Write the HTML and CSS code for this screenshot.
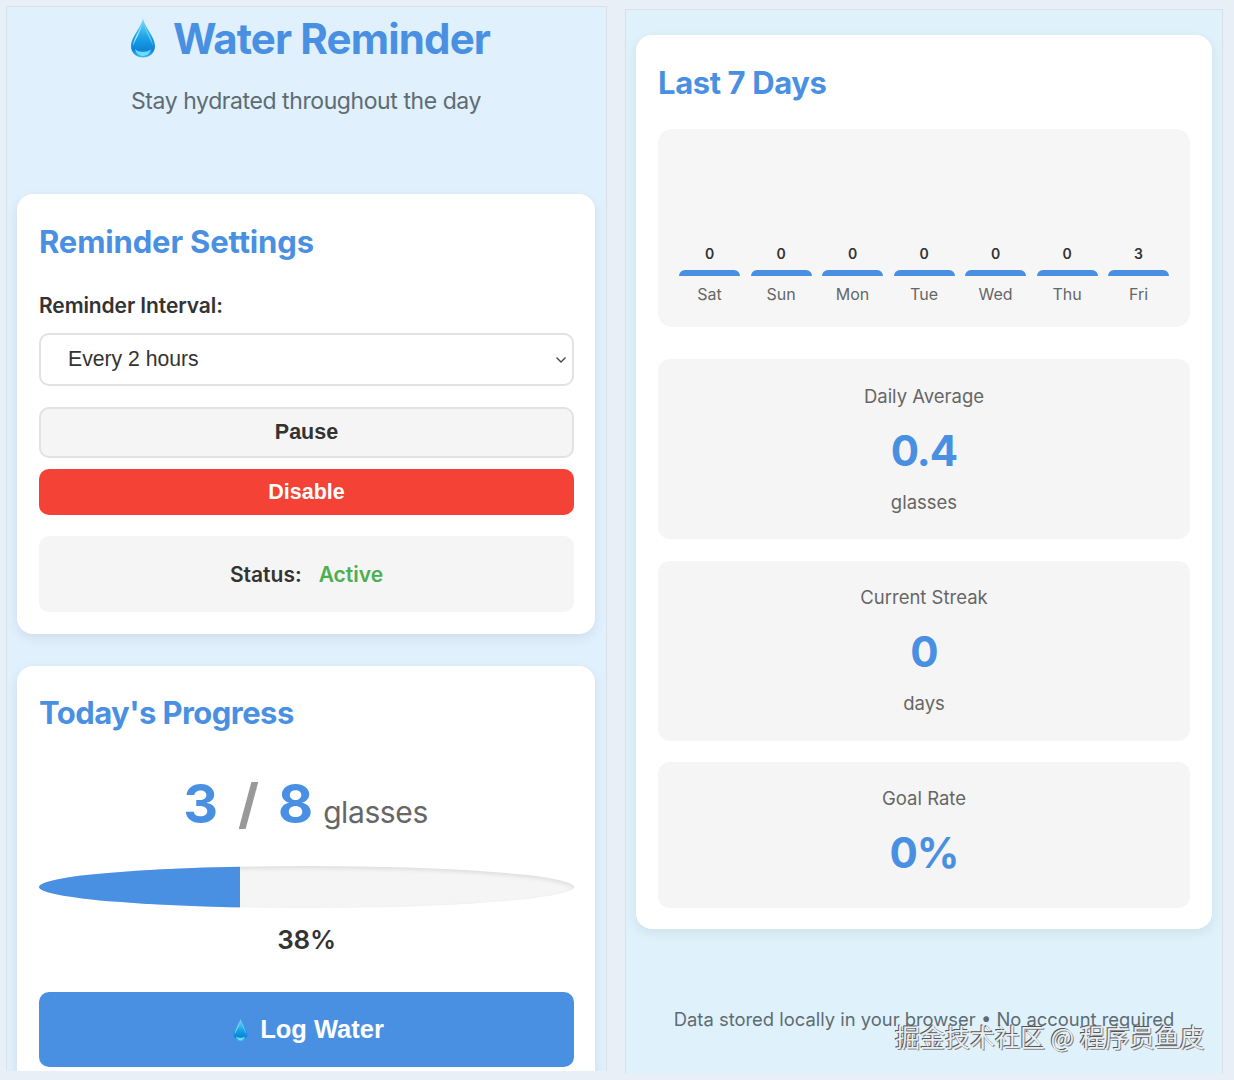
FILE: index.html
```html
<!DOCTYPE html>
<html lang="en">
<head>
<meta charset="utf-8">
<title>Water Reminder</title>
<link rel="stylesheet" href="styles.css">
</head>
<body>
<svg class="defs" width="0" height="0" aria-hidden="true">
  <defs>
    <linearGradient id="dropFill" x1="0" y1="0" x2="0" y2="1">
      <stop offset="0" stop-color="#7fdcfb"/>
      <stop offset="0.45" stop-color="#1ea7ea"/>
      <stop offset="0.8" stop-color="#0c84d6"/>
      <stop offset="1" stop-color="#3cc0f2"/>
    </linearGradient>
    <symbol id="drop" viewBox="0 0 26 40">
      <path d="M13 0.5C11.5 9 1 19 1 28C1 35 6.4 39.5 13 39.5C19.6 39.5 25 35 25 28C25 19 14.5 9 13 0.5Z" fill="url(#dropFill)"/>
      <path d="M13 2C12 10 3.4 20 3 28C5 22 10.5 15 13 2Z" fill="#d4f4ff" opacity=".85"/>
      <path d="M13 2C14 10 22.6 20 23 28C21 22 15.5 15 13 2Z" fill="#a8e8ff" opacity=".6"/>
      <path d="M5 31C6 36 10 38 13 38C16 38 20 36 21 31C18 35 8 35 5 31Z" fill="#7fe3ff" opacity=".85"/>
    </symbol>
  </defs>
</svg>
<div class="screen">
  <main class="panel panel-left">
    <header class="hero">
      <h1 class="hero-title"><svg class="hero-drop"><use href="#drop"/></svg><span>Water Reminder</span></h1>
      <p class="hero-sub">Stay hydrated throughout the day</p>
    </header>
    <section class="card card-settings">
      <h2 class="card-title title-settings">Reminder Settings</h2>
      <label class="field-label">Reminder Interval:</label>
      <div class="select">
        <span>Every 2 hours</span>
        <svg class="chevron" viewBox="0 0 12 8"><path d="M1.5 1.5L6 6L10.5 1.5" fill="none" stroke="#444" stroke-width="1.3"/></svg>
      </div>
      <button class="btn btn-pause">Pause</button>
      <button class="btn btn-disable">Disable</button>
      <div class="status"><span class="status-label">Status:</span><span class="status-value">Active</span></div>
    </section>
    <section class="card card-progress">
      <h2 class="card-title title-progress">Today's Progress</h2>
      <div class="count"><span class="count-num">3</span><span class="count-slash">/</span><span class="count-num">8</span><span class="count-unit">glasses</span></div>
      <div class="track"><div class="track-fill" style="width:37.5%"></div></div>
      <div class="percent">38%</div>
      <button class="btn-log"><svg class="log-drop"><use href="#drop"/></svg><span>Log Water</span></button>
    </section>
  </main>
  <aside class="panel panel-right">
    <section class="card card-history">
      <h2 class="card-title">Last 7 Days</h2>
      <div class="chart">
        <div class="day"><span class="day-val">0</span><i class="day-bar"></i><span class="day-name">Sat</span></div>
        <div class="day"><span class="day-val">0</span><i class="day-bar"></i><span class="day-name">Sun</span></div>
        <div class="day"><span class="day-val">0</span><i class="day-bar"></i><span class="day-name">Mon</span></div>
        <div class="day"><span class="day-val">0</span><i class="day-bar"></i><span class="day-name">Tue</span></div>
        <div class="day"><span class="day-val">0</span><i class="day-bar"></i><span class="day-name">Wed</span></div>
        <div class="day"><span class="day-val">0</span><i class="day-bar"></i><span class="day-name">Thu</span></div>
        <div class="day"><span class="day-val">3</span><i class="day-bar"></i><span class="day-name">Fri</span></div>
      </div>
      <div class="stat">
        <div class="stat-label">Daily Average</div>
        <div class="stat-value">0.4</div>
        <div class="stat-unit">glasses</div>
      </div>
      <div class="stat">
        <div class="stat-label">Current Streak</div>
        <div class="stat-value">0</div>
        <div class="stat-unit">days</div>
      </div>
      <div class="stat stat-last">
        <div class="stat-label">Goal Rate</div>
        <div class="stat-value">0%</div>
      </div>
    </section>
    <footer class="foot">Data stored locally in your browser • No account required</footer>
  </aside>
</div>
<div class="watermark">掘金技术社区 @ 程序员鱼皮</div>
</body>
</html>
```
FILE: styles.css
```css
* { box-sizing: border-box; }
html, body { margin: 0; height: 1080px; overflow: hidden; }
body {
  position: relative;
  background: #e9eff6;
  font-family: Inter, "Liberation Sans", sans-serif;
  color: #333;
}
.defs { position: absolute; }
.screen {
  display: flex;
  align-items: flex-start;
  gap: 18px;
  padding: 6px 11px 0 6px;
  height: 1071px;
}
.panel {
  height: 100%;
  overflow: hidden;
  background: #e0f0fc;
  border: 1px solid #d8e0ea;
  border-bottom: 0;
}
.panel-left { width: 601px; padding: 0 11px 0 10px; }
.panel-right { width: 598px; margin-top: 3px; padding: 25px 10px 0; background: #dff2fc; }
.hero { height: 187px; text-align: center; padding-top: 7px; }
.hero-title {
  margin: 0;
  display: flex;
  justify-content: center;
  align-items: center;
  gap: 17px;
  font-size: 42px;
  line-height: 50px;
  font-weight: 700;
  color: #4a90e2;
  letter-spacing: -0.85px;
  padding-left: 8px;
}
.hero-drop { width: 26px; height: 40px; margin-top: -3px; }
.hero-sub { margin: 23px 0 0; font-size: 23px; line-height: 28px; color: #5f6b73; letter-spacing: -0.42px; }
.card {
  background: #fff;
  border-radius: 16px;
  box-shadow: 0 4px 12px rgba(0, 0, 0, .08);
  padding: 22px;
}
.card-settings { height: 440px; margin-bottom: 32px; padding-top: 23px; padding-right: 21px; }
.card-progress { padding-right: 21px; }
.card-title {
  margin: 0;
  font-size: 31px;
  line-height: 50px;
  font-weight: 700;
  color: #4a90e2;
  letter-spacing: -0.4px;
}
.title-settings { letter-spacing: -0.15px; }
.title-progress { letter-spacing: -0.55px; }
.field-label { display: block; margin-top: 26px; font-size: 21px; line-height: 26px; font-weight: 600; color: #333; letter-spacing: -0.1px; }
.select {
  display: flex;
  align-items: center;
  justify-content: space-between;
  height: 53px;
  margin-top: 14px;
  padding: 0 5px 2px 27px;
  border: 2.5px solid #e2e2e2;
  border-radius: 10px;
  font: 21.2px "Liberation Sans", Arial, sans-serif;
  color: #333;
}
.chevron { width: 12px; height: 8px; margin-top: 2px; }
.btn {
  display: block;
  width: 100%;
  border-radius: 10px;
  font: 700 21.5px "Liberation Sans", Arial, sans-serif;
  text-align: center;
}
.btn-pause { height: 51px; margin-top: 21px; background: #f5f5f5; border: 2.5px solid #e2e2e2; color: #333; }
.btn-disable { height: 46px; margin-top: 11px; background: #f44336; border: 0; color: #fff; }
.status {
  display: flex;
  justify-content: center;
  align-items: center;
  gap: 17px;
  height: 76px;
  margin-top: 21px;
  background: #f5f5f5;
  border-radius: 10px;
  font-size: 21px;
  font-weight: 600;
}
.status-value { color: #4caf50; }
.count {
  display: flex;
  justify-content: center;
  align-items: baseline;
  margin-top: 30.5px;
  padding-right: 2px;
  height: 70px;
  line-height: 70px;
}
.count-num { font-size: 54px; font-weight: 700; color: #4a90e2; }
.count-slash { font-size: 54px; font-weight: 700; color: #999; margin: 0 19px 0 20px; }
.count-unit { font-size: 30px; color: #666; margin-left: 10px; letter-spacing: -0.4px; }
.track {
  height: 42px;
  margin-top: 27.5px;
  background: #f5f5f5;
  border-radius: 50%;
  overflow: hidden;
  box-shadow: inset 0 2px 4px rgba(0, 0, 0, .1);
}
.track-fill { height: 100%; background: #4a90e2; }
.percent { margin-top: 16px; text-align: center; font-size: 26px; line-height: 32px; font-weight: 600; color: #333; letter-spacing: -0.2px; }
.btn-log {
  display: flex;
  align-items: center;
  justify-content: center;
  gap: 12px;
  width: 100%;
  height: 75px;
  margin-top: 36px;
  padding: 0 0 0 4px;
  border: 0;
  border-radius: 10px;
  background: #4a90e2;
  color: #fff;
  font: 700 25.5px "Liberation Sans", Arial, sans-serif;
}
.log-drop { width: 15px; height: 24px; }
.card-history { height: 894px; padding-top: 23px; }
.chart {
  display: flex;
  align-items: flex-end;
  justify-content: center;
  gap: 10.5px;
  height: 198px;
  margin-top: 21px;
  padding: 0 0 23px;
  background: #f6f6f7;
  border-radius: 14px;
}
.day { display: flex; flex-direction: column; align-items: center; width: 61px; }
.day-val { font-size: 14px; line-height: 17px; font-weight: 600; color: #333; }
.day-bar { display: block; width: 100%; height: 6px; margin-top: 8px; background: #4a90e2; border-radius: 6px 6px 0 0; }
.day-name { margin-top: 8px; font-size: 16px; line-height: 20px; color: #666; }
.stat {
  height: 180px;
  margin-top: 21.5px;
  padding-top: 24px;
  background: #f5f5f5;
  border-radius: 12px;
  text-align: center;
  color: #666;
  font-size: 18.5px;
  line-height: 24px;
}
.chart + .stat { margin-top: 32px; padding-top: 25px; }
.stat-last { height: 146px; }
.stat-value { margin: 15px 0 11px; font-size: 42px; line-height: 56px; font-weight: 700; color: #4a90e2; letter-spacing: -1px; }
.foot {
  margin-top: 78px;
  text-align: center;
  font-size: 18.4px;
  line-height: 24px;
  color: #5f6b73;
}
.watermark {
  position: absolute;
  left: 895px;
  top: 1021px;
  font-family: "Noto Sans CJK SC", sans-serif;
  font-size: 25px;
  line-height: 30px;
  color: #e9eef3;
  text-shadow: -1px -1px 0 #555, 1px 1px 0 #888;
  white-space: nowrap;
}
```
